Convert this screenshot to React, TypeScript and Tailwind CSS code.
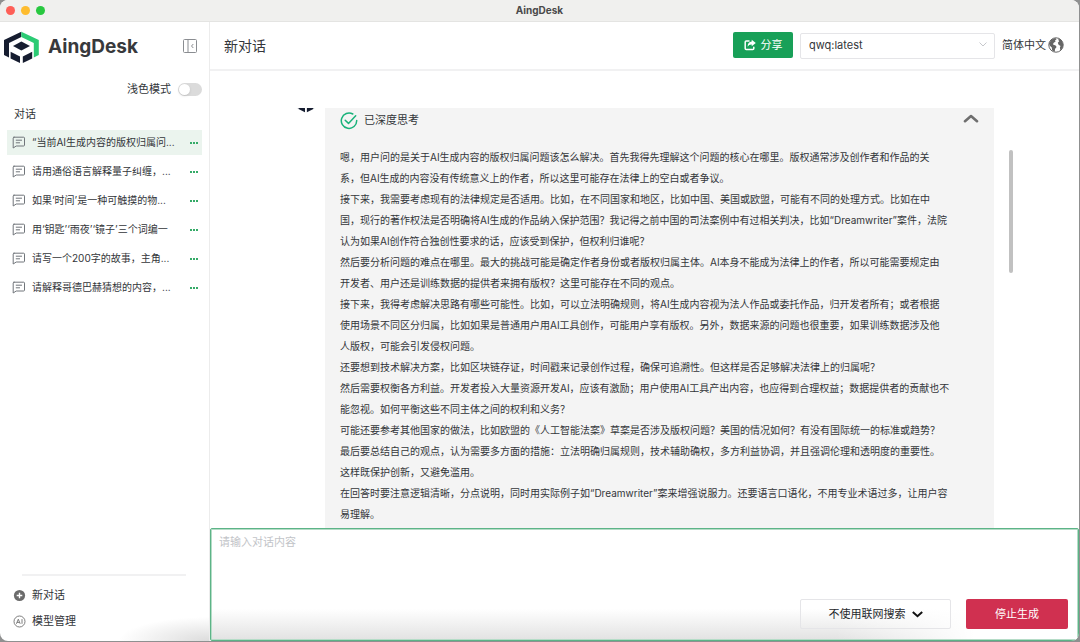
import type { ReactNode } from "react";
import { useState } from "react";

const conversations = [
  "“当前AI生成内容的版权归属问...",
  "请用通俗语言解释量子纠缠，...",
  "如果‘时间’是一种可触摸的物...",
  "用‘钥匙’‘雨夜’‘镜子’三个词编一",
  "请写一个200字的故事，主角...",
  "请解释哥德巴赫猜想的内容，...",
];

const thoughts = [
  "嗯，用户问的是关于AI生成内容的版权归属问题该怎么解决。首先我得先理解这个问题的核心在哪里。版权通常涉及创作者和作品的关\n系，但AI生成的内容没有传统意义上的作者，所以这里可能存在法律上的空白或者争议。",
  "接下来，我需要考虑现有的法律规定是否适用。比如，在不同国家和地区，比如中国、美国或欧盟，可能有不同的处理方式。比如在中\n国，现行的著作权法是否明确将AI生成的作品纳入保护范围？我记得之前中国的司法案例中有过相关判决，比如“Dreamwriter”案件，法院\n认为如果AI创作符合独创性要求的话，应该受到保护，但权利归谁呢？",
  "然后要分析问题的难点在哪里。最大的挑战可能是确定作者身份或者版权归属主体。AI本身不能成为法律上的作者，所以可能需要规定由\n开发者、用户还是训练数据的提供者来拥有版权？这里可能存在不同的观点。",
  "接下来，我得考虑解决思路有哪些可能性。比如，可以立法明确规则，将AI生成内容视为法人作品或委托作品，归开发者所有；或者根据\n使用场景不同区分归属，比如如果是普通用户用AI工具创作，可能用户享有版权。另外，数据来源的问题也很重要，如果训练数据涉及他\n人版权，可能会引发侵权问题。",
  "还要想到技术解决方案，比如区块链存证，时间戳来记录创作过程，确保可追溯性。但这样是否足够解决法律上的归属呢？",
  "然后需要权衡各方利益。开发者投入大量资源开发AI，应该有激励；用户使用AI工具产出内容，也应得到合理权益；数据提供者的贡献也不\n能忽视。如何平衡这些不同主体之间的权利和义务？",
  "可能还要参考其他国家的做法，比如欧盟的《人工智能法案》草案是否涉及版权问题？美国的情况如何？有没有国际统一的标准或趋势？",
  "最后要总结自己的观点，认为需要多方面的措施：立法明确归属规则，技术辅助确权，多方利益协调，并且强调伦理和透明度的重要性。\n这样既保护创新，又避免滥用。",
  "在回答时要注意逻辑清晰，分点说明，同时用实际例子如“Dreamwriter”案来增强说服力。还要语言口语化，不用专业术语过多，让用户容\n易理解。",
];

function Logo({ className }: { className: string }) {
  return (
    <svg viewBox="0 0 35 33" className={className} aria-hidden="true">
      <path d="M17.3.7 0 9v15l5 2.4V11.9l12.3-6z" fill="#161d30" />
      <path d="M17.3.7 34.8 9v15l-5 2.4V11.9l-12.5-6z" fill="#2bcb74" />
      <path d="m17.4 10.6 8.6 4.3-8.6 4.5-8.4-4.5z" fill="#161d30" />
      <path d="m6.6 20.8 9.4 4.6V32l-9.4-4.5z" fill="#161d30" />
      <path d="m28.2 20.8-9.4 4.6V32l9.4-4.5z" fill="#161d30" />
    </svg>
  );
}

function ChatIcon() {
  return (
    <svg viewBox="0 0 14 13" className="h-[13px] w-[14px] shrink-0" fill="none" stroke="#70757a" strokeWidth="1" strokeLinejoin="round" strokeLinecap="round" aria-hidden="true">
      <path d="M2 1.2h9.6q.9 0 .9.9v7q0 .9-.9.9H4.2L1.2 12V2.1q0-.9.8-.9z" />
      <path d="M4.2 4.2h5.4M4.2 6.8h3.4" />
    </svg>
  );
}

function FooterAction({ icon, children }: { icon: ReactNode; children: ReactNode }) {
  return (
    <button type="button" className="flex h-[26px] items-center gap-[6px] text-[11px] text-[#33363a]">
      {icon}
      {children}
    </button>
  );
}

function Sidebar() {
  const [dark, setDark] = useState(false);
  return (
    <aside className="flex w-[210px] shrink-0 flex-col border-r border-[#ececec]">
      <div className="flex h-[51px] items-center pr-3 pl-[4px]">
        <Logo className="h-[33px] w-[35px]" />
        <h1 className="ml-[9px] text-[19px] font-bold text-[#37393c]">AingDesk</h1>
        <button type="button" aria-label="收起侧栏" className="mb-1 ml-auto">
          <svg viewBox="0 0 14 14" className="size-[14px]" fill="none" stroke="#8a8d91" aria-hidden="true">
            <rect x=".5" y=".5" width="13" height="13" rx="1" />
            <path d="M5 .5v13M10.3 5 8.5 7l1.8 2" />
          </svg>
        </button>
      </div>
      <label className="flex h-[32px] items-center justify-end gap-[7px] pr-[7px] text-[11px] text-[#33363a]">
        浅色模式
        <input type="checkbox" checked={dark} onChange={(e) => setDark(e.target.checked)} className="peer sr-only" />
        <span className="flex h-[13px] w-[24px] items-center rounded-full bg-[#dbdbdb] px-px peer-checked:justify-end">
          <span className="size-[11px] rounded-full bg-white shadow" />
        </span>
      </label>
      <h2 className="pl-[14px] text-[11px] leading-[18px] text-[#33363a]">对话</h2>
      <ul className="mt-[7px] flex flex-col gap-1 pr-[7px] pl-[7px]">
        {conversations.map((title, i) => (
          <li key={title} className={i === 0 ? "flex h-[25px] items-center bg-[#ebf4ee] pr-1 pl-[5px]" : "flex h-[25px] items-center pr-1 pl-[5px]"}>
            <a href="#chat" className="flex min-w-0 flex-1 items-center gap-[6px] text-[10px] whitespace-nowrap text-[#33363a]">
              <ChatIcon />
              {title}
            </a>
            <button type="button" aria-label="更多" className="shrink-0">
              <svg viewBox="0 0 8 2" className="h-[2px] w-[8px]" fill="#35ab68" aria-hidden="true">
                <path d="M0 0h2v2H0zM3 0h2v2H3zM6 0h2v2H6z" />
              </svg>
            </button>
          </li>
        ))}
      </ul>
      <div className="mt-auto mr-[23px] ml-[22px] border-t-2 border-[#f1f1f2]" />
      <div className="flex flex-col bg-[radial-gradient(90px_24px_at_100%_100%,#dcdcdc,transparent)] pt-[6px] pb-[7px] pl-[13px]">
        <FooterAction
          icon={
            <svg viewBox="0 0 13 13" className="size-[13px]" aria-hidden="true">
              <circle cx="6.5" cy="6.5" r="5.6" fill="#6b6b6b" />
              <path d="M6.5 3.7v5.6M3.7 6.5h5.6" stroke="#fff" strokeWidth="1.4" />
            </svg>
          }
        >
          新对话
        </FooterAction>
        <FooterAction
          icon={
            <svg viewBox="0 0 13 13" className="size-[13px]" fill="none" stroke="#707070" aria-hidden="true">
              <circle cx="6.5" cy="6.5" r="5.5" strokeWidth=".9" />
              <path d="M3.4 8.8 5.3 4.2l1.9 4.6M4 7.4h2.6M9 4.1v4.7" strokeWidth=".9" />
            </svg>
          }
        >
          模型管理
        </FooterAction>
      </div>
    </aside>
  );
}

function Header() {
  return (
    <header className="flex h-[49px] shrink-0 items-center border-b-2 border-[#f1f1f2] pr-[15px] pb-px pl-[14px]">
      <h2 className="text-[14px] text-[#33363a]">新对话</h2>
      <button type="button" className="ml-auto flex h-[26px] w-[60px] items-center justify-center gap-[5px] rounded-xs bg-[#18a058] text-[11px] text-white">
        <svg viewBox="0 0 12 12" className="size-[12px]" aria-hidden="true">
          <path d="M5 2H2.2q-1 0-1 1v6.6q0 1 1 1h6.6q1 0 1-1V8.2" fill="none" stroke="#fff" strokeWidth="1.5" strokeLinecap="round" />
          <path d="M7.7.7 11.8 4 7.7 7.3V5.4Q5 5.2 3.6 7.7 3.7 3 7.7 2.6z" fill="#fff" />
        </svg>
        分享
      </button>
      <div className="relative ml-[7px]">
        <select aria-label="模型" className="h-[26px] w-[195px] appearance-none rounded-xs border border-[#e5e5e8] bg-white px-2 text-[11px] text-[#33363a]">
          <option>qwq:latest</option>
        </select>
        <svg viewBox="0 0 8 5" className="pointer-events-none absolute top-[11px] right-2 h-[5px] w-[8px]" fill="none" stroke="#c6c8cc" aria-hidden="true">
          <path d="m.5.5 3.5 3.5L7.5.5" />
        </svg>
      </div>
      <button type="button" className="ml-[7px] flex items-center gap-[2px] text-[11px] text-[#33363a]">
        简体中文
        <svg viewBox="0 0 16 16" className="size-4" aria-hidden="true">
          <circle cx="8" cy="8" r="7.2" fill="#fff" stroke="#666" />
          <path d="M1 6.2 3.6 2.5 7.2 1 8.6 2.2 7 3.5 7.6 4.6 5.5 6 5 7.6 7.6 8.4 8.6 10 7 12 6.8 14.8 4.2 13.4 3.8 10.4 1.6 8.6z" fill="#666" />
          <path d="m10.4 1.3 3.1 2L15.2 7l-.4 3.4-2.4 3.2-.5-2.8.6-1.8-1.9-1.2-.8-2.1 1.4-1.5-.8-1.2z" fill="#666" />
        </svg>
      </button>
    </header>
  );
}

function Answer() {
  return (
    <section className="min-h-0 flex-1 overflow-hidden pt-[37px]">
      <div className="flex h-full overflow-hidden pl-[84px]">
        <Logo className="-mt-[18px] h-[23px] w-[24px] shrink-0" />
        <article className="ml-[7px] min-w-0 flex-1 bg-[#f4f4f4] px-[15px]">
          <div className="flex h-[25px] items-center text-[11px] text-[#33363a]">
            <svg viewBox="0 0 18 18" className="size-[18px]" fill="none" stroke="#18b27a" strokeWidth="1.5" strokeLinecap="round" strokeLinejoin="round" aria-hidden="true">
              <path d="M12.8 2A7.7 7.7 0 1 0 16.7 8.6" />
              <path d="m5.2 8.2 3.3 3.2 7.2-7.7" />
            </svg>
            <span className="ml-[6px]">已深度思考</span>
            <button type="button" aria-label="收起" className="ml-auto">
              <svg viewBox="0 0 16 9" className="mb-1 h-[9px] w-[16px]" fill="none" stroke="#6e6e6e" strokeWidth="2.6" strokeLinecap="round" strokeLinejoin="round" aria-hidden="true">
                <path d="M2 7.2 8 2l6 5.2" />
              </svg>
            </button>
          </div>
          <div className="mt-[14px] text-[10px] leading-[21px] whitespace-pre-line text-[#33363a]">
            {thoughts.map((text) => (
              <p key={text}>{text}</p>
            ))}
          </div>
        </article>
        <div className="mt-[42px] mr-[66px] ml-[15px] h-[123px] w-1 shrink-0 rounded-full bg-[#c1c1c1]" />
      </div>
    </section>
  );
}

function Composer() {
  return (
    <form className="flex h-[113px] shrink-0 flex-col rounded-xs border border-[#5cb487] bg-[linear-gradient(to_left,#fff_12%,transparent_28%),linear-gradient(to_bottom,#fff_72%,#e2e2e2)] shadow-[inset_0_0_0_1px_#b5dcc7]">
      <textarea aria-label="对话内容" placeholder="请输入对话内容" className="min-h-0 w-full flex-1 resize-none bg-transparent px-2 py-1 text-[11px] leading-[18px] outline-none placeholder:text-[#c2c4c8]" />
      <div className="flex justify-end gap-[15px] pr-[10px] pb-[11px]">
        <button type="button" className="flex h-[30px] w-[151px] items-center justify-center gap-[6px] rounded-xs border border-[#e5e5e8] text-[11px] text-[#26282b]">
          不使用联网搜索
          <svg viewBox="0 0 11 7" className="h-[7px] w-[11px]" fill="none" stroke="#111" strokeWidth="2" aria-hidden="true">
            <path d="m.8 1 4.7 4.2L10.2 1" />
          </svg>
        </button>
        <button type="button" className="h-[30px] w-[102px] rounded-xs bg-[#d03050] text-[11px] text-white">
          停止生成
        </button>
      </div>
    </form>
  );
}

export default function App() {
  return (
    <div className="h-screen bg-[#8f9090] pr-px pb-px font-['Inter','Noto_Sans_CJK_SC',sans-serif]">
      <div className="flex h-full flex-col overflow-hidden rounded-lg bg-white">
        <div className="grid h-[22px] shrink-0 grid-cols-[1fr_auto_1fr] items-center border-b border-[#e4e4e2] bg-[#f0f0ee] px-[6px]">
          <div className="flex gap-[6px]">
            <span className="size-[9px] rounded-full bg-[#fe5f57]" />
            <span className="size-[9px] rounded-full bg-[#febc2e]" />
            <span className="size-[9px] rounded-full bg-[#28c840]" />
          </div>
          <span className="text-[10px] font-bold text-[#4a4a4a]">AingDesk</span>
        </div>
        <div className="flex min-h-0 flex-1">
          <Sidebar />
          <main className="flex min-w-0 flex-1 flex-col">
            <Header />
            <Answer />
            <Composer />
          </main>
        </div>
      </div>
    </div>
  );
}
